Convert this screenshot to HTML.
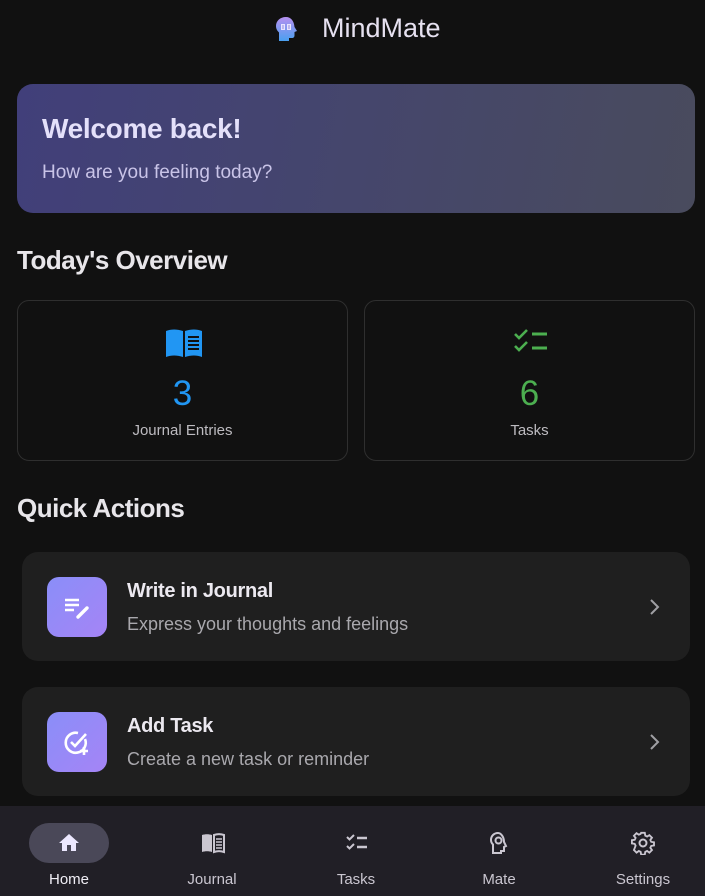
<!DOCTYPE html>
<html><head><meta charset="utf-8"><style>
*{margin:0;padding:0;box-sizing:border-box}
body{width:705px;height:896px;background:#111111;font-family:"Liberation Sans",sans-serif;position:relative;overflow:hidden;color:#e6e1ea}
.abs{position:absolute}
.hdr{left:0;top:0;width:705px;height:60px}
.welcome{left:17px;top:84px;width:678px;height:129px;border-radius:16px;background:linear-gradient(100deg,#413f7a 0%,#45466c 50%,#494b5d 100%)}
.welcome h1{position:absolute;left:25px;top:29px;font-size:28px;font-weight:bold;color:#e4e0fa;letter-spacing:-0.3px}
.welcome p{position:absolute;left:25px;top:78px;font-size:19px;color:#c9c4e8}
h2{position:absolute;font-size:26px;font-weight:bold;color:#e8e6ea;letter-spacing:-0.5px}
.stat{top:300px;width:331px;height:161px;border:1px solid #2f2f2f;border-radius:12px;text-align:center}
.stat .n{position:absolute;left:0;right:0;top:73px;font-size:35px}
.stat .l{position:absolute;left:0;right:0;top:121px;font-size:15px;color:#bdbbc0}
.act{left:22px;width:668px;height:109px;border-radius:16px;background:#1f1f1f}
.ib{position:absolute;left:25px;top:25px;width:60px;height:60px;border-radius:12px;background:linear-gradient(135deg,#8a8ef8,#a584f6)}
.act .t{position:absolute;left:105px;top:28px;font-size:20px;font-weight:bold;color:#ece9f0;letter-spacing:-0.3px}
.act .s{position:absolute;left:105px;top:62px;font-size:18px;color:#a9a8ad}
.chev{position:absolute;left:626px;top:46px}
.nav{left:0;top:806px;width:705px;height:90px;background:#211f26}
.it{position:absolute;top:0;width:100px;height:90px;text-align:center}
.it .lb{position:absolute;left:0;right:0;top:65px;font-size:15px;color:#cac6d0}
.it svg{position:absolute;left:38px;top:25px}
</style></head><body>
<div class="abs hdr">
<svg class="abs" style="left:275px;top:16px" width="24" height="26" viewBox="0 0 24 26"><defs><linearGradient id="g" x1="0" y1="0" x2="0" y2="1"><stop offset="0" stop-color="#b690f0"/><stop offset="1" stop-color="#4aa0f0"/></linearGradient></defs><path d="M11 1C5 1 1 5 1 10c0 3 1.5 5 3 6.5V25h10v-3h3c1.5 0 2.5-1 2.5-2.5V16l2.5-1-2.5-4C19 5 16 1 11 1z" fill="url(#g)"/><path d="M6 8h4v6H6zM12 8h4v6h-4z" fill="#e8e4ff"/><path d="M7 10h2M7 12h2M13 10h2M13 12h2" stroke="#7a70d0" stroke-width=".8"/></svg>
<div class="abs" style="left:322px;top:13px;font-size:27px;color:#e6e1f0">MindMate</div>
</div>
<div class="abs welcome"><h1>Welcome back!</h1><p>How are you feeling today?</p></div>
<h2 style="left:17px;top:245px">Today's Overview</h2>
<div class="abs stat" style="left:17px">
<svg style="position:absolute;left:147px;top:27px" width="38" height="30" viewBox="0 0 38 30"><path d="M1 3C6 1 12 1 18 3V29C12 27 6 27 1 29Z" fill="#2196f3"/><path d="M20 3C26 1 32 1 37 3V29C32 27 26 27 20 29Z" fill="#2196f3"/><path d="M23 9h11M23 13h11M23 17h11M23 21h11" stroke="#111" stroke-width="2"/></svg>
<div class="n" style="color:#2196f3">3</div><div class="l">Journal Entries</div></div>
<div class="abs stat" style="left:364px">
<svg style="position:absolute;left:148px;top:27px" width="36" height="26" viewBox="0 0 36 26"><path d="M2 6l4 4 8-8M2 18l4 4 8-8" stroke="#4caf50" stroke-width="2.6" fill="none"/><path d="M19 6h15M19 20h15" stroke="#4caf50" stroke-width="3"/></svg>
<div class="n" style="color:#4caf50">6</div><div class="l">Tasks</div></div>
<h2 style="left:17px;top:493px">Quick Actions</h2>
<div class="abs act" style="top:552px"><div class="ib"><svg width="60" height="60" viewBox="0 0 60 60"><path d="M18 23h14M18 28h14M18 33h9" stroke="#fff" stroke-width="2.4"/><path d="M31 40l9-9" stroke="#fff" stroke-width="3.4" stroke-linecap="round"/></svg></div>
<div class="t">Write in Journal</div><div class="s">Express your thoughts and feelings</div>
<svg class="chev" width="14" height="18" viewBox="0 0 14 18"><path d="M3 2l7 7-7 7" stroke="#a0a0a4" stroke-width="2" fill="none"/></svg></div>
<div class="abs act" style="top:687px"><div class="ib"><svg width="60" height="60" viewBox="0 0 60 60"><path d="M38 27A10 10 0 1 1 31 21" stroke="#fff" stroke-width="2.6" fill="none"/><path d="M24 30l4 4 11-12" stroke="#fff" stroke-width="2.6" fill="none"/><path d="M37 35v8M33 39h8" stroke="#fff" stroke-width="2.6"/></svg></div>
<div class="t">Add Task</div><div class="s">Create a new task or reminder</div>
<svg class="chev" width="14" height="18" viewBox="0 0 14 18"><path d="M3 2l7 7-7 7" stroke="#a0a0a4" stroke-width="2" fill="none"/></svg></div>
<div class="abs nav">
<div class="abs" style="left:29px;top:17px;width:80px;height:40px;border-radius:20px;background:#4a4858"></div>
<div class="it" style="left:19px"><svg width="24" height="24" viewBox="0 0 24 24"><path d="M12 3L2 12h3v8h5v-6h4v6h5v-8h3z" fill="#ece8ff"/></svg><div class="lb" style="color:#f0eef5">Home</div></div>
<div class="it" style="left:162px"><svg width="26" height="24" viewBox="0 0 24 24"><path d="M1 4c3-1 7-1 10 0v17c-3-1-7-1-10 0z" fill="#cac6d0"/><path d="M13 4c3-1 7-1 10 0v17c-3-1-7-1-10 0z" fill="none" stroke="#cac6d0" stroke-width="2"/><path d="M15 8h6M15 11h6M15 14h6M15 17h6" stroke="#cac6d0" stroke-width="1.4"/></svg><div class="lb">Journal</div></div>
<div class="it" style="left:306px"><svg width="26" height="24" viewBox="0 0 24 24"><path d="M2 6l2.5 2.5L9 4M2 15l2.5 2.5L9 13" stroke="#cac6d0" stroke-width="2" fill="none"/><path d="M12 7h10M12 16h10" stroke="#cac6d0" stroke-width="2.4"/></svg><div class="lb">Tasks</div></div>
<div class="it" style="left:449px"><svg width="24" height="24" viewBox="0 0 24 24"><path d="M11 2C7 2 4 5 4 9c0 2 1 3.5 2 4.5V22h8v-2h3v-4l2-1-2-4c0-5-3-9-6-9z" fill="none" stroke="#cac6d0" stroke-width="2"/><circle cx="11.5" cy="9.5" r="3" fill="none" stroke="#cac6d0" stroke-width="2"/></svg><div class="lb">Mate</div></div>
<div class="it" style="left:593px"><svg width="24" height="24" viewBox="0 0 24 24"><path d="M10 2h4l.5 3 2 1 2.5-1.5 2.8 2.8L20 9.8l1 2 3 .5v3.4l-3 .5-1 2 1.8 2.5-2.8 2.8-2.5-1.8-2 1-.5 3h-4l-.5-3-2-1-2.5 1.8-2.8-2.8L4 16l-1-2-3-.5V10l3-.5 1-2L2.2 5.2 5 2.4 7.5 4l2-1z" transform="scale(.92) translate(1 0)" fill="none" stroke="#cac6d0" stroke-width="2"/><circle cx="12" cy="12" r="3.5" fill="none" stroke="#cac6d0" stroke-width="2"/></svg><div class="lb">Settings</div></div>
</div>
</body></html>
